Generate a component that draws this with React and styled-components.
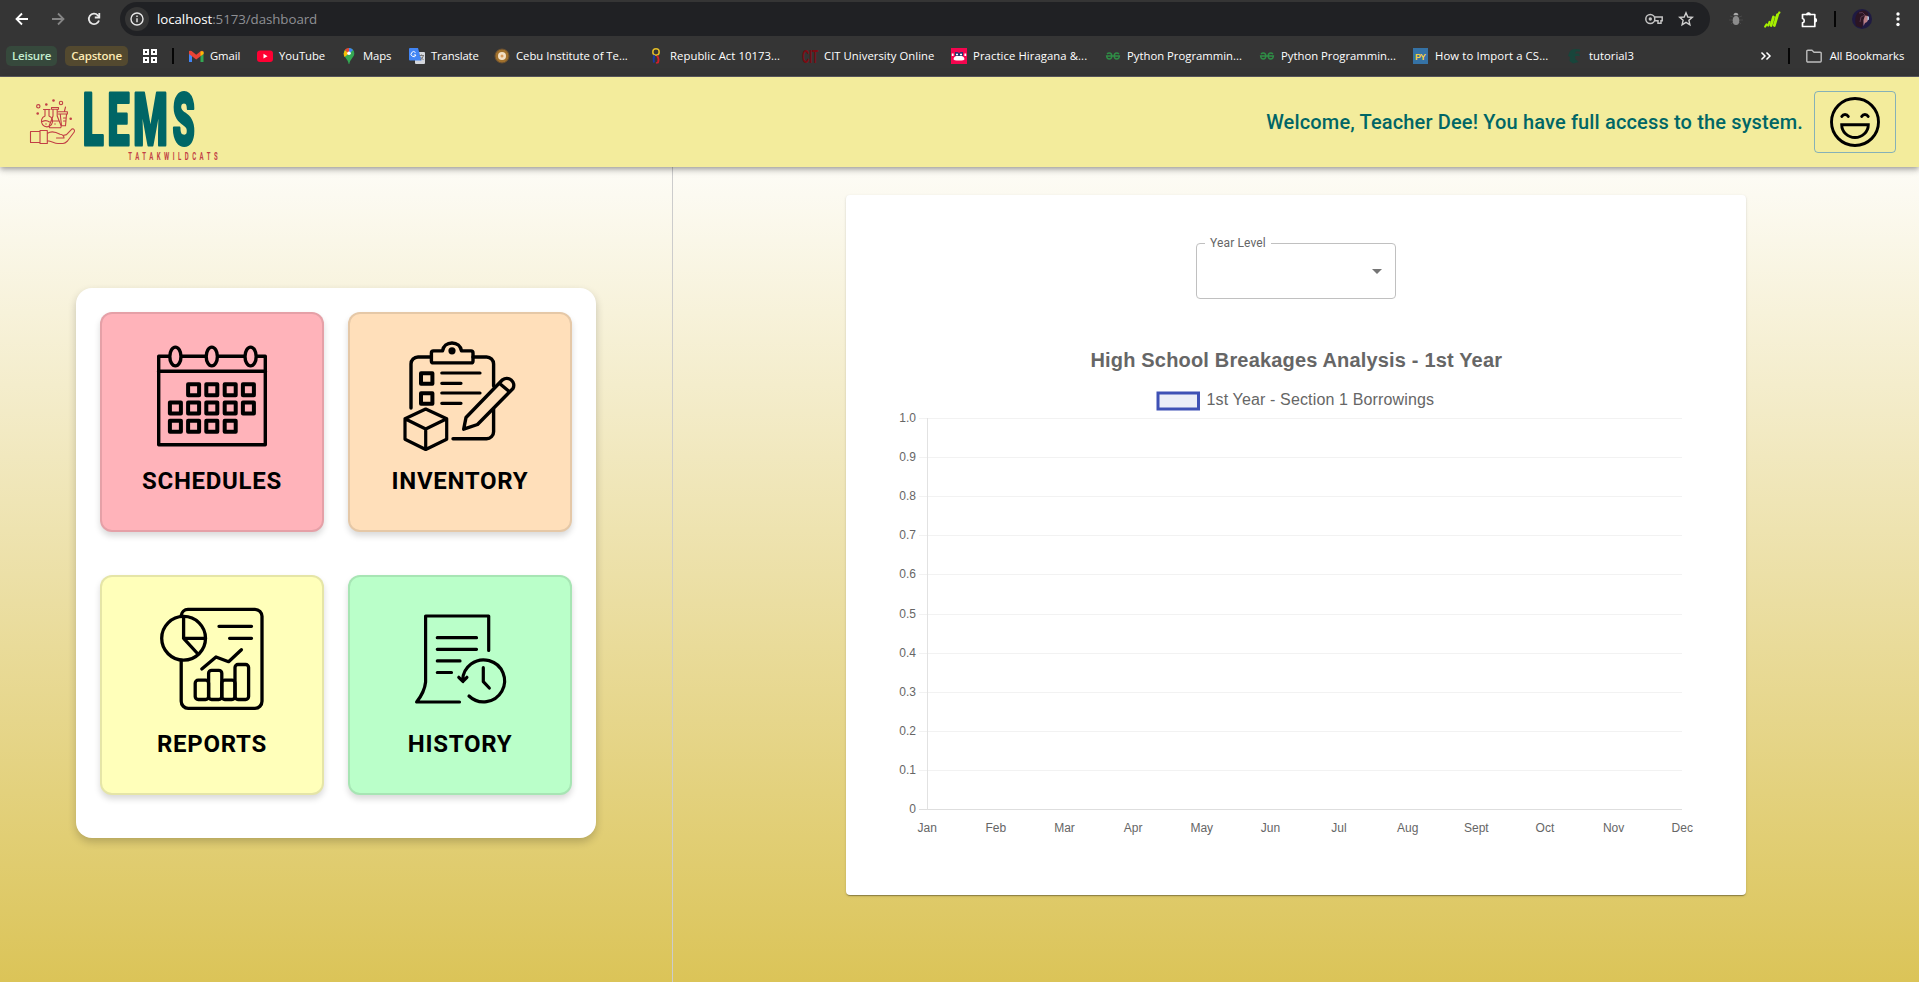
import React from "react";
import styled, { createGlobalStyle } from "styled-components";

const GlobalStyle = createGlobalStyle`
  * { box-sizing: border-box; }
  html, body { margin: 0; padding: 0; }
  body { font-family: Roboto, "Liberation Sans", sans-serif; background: #fff; overflow: hidden; }
`;

const uiFont = `"Open Sans", "Noto Sans", sans-serif`;

const Window = styled.div`
  display: flex;
  flex-direction: column;
  width: 100vw;
  height: 100vh;
`;

/* ---------- browser chrome ---------- */
const Chrome = styled.div`
  flex: none;
  height: 77px;
  background: #353535;
  border-bottom: 1px solid #5c5b60;
  font-family: ${uiFont};
  color: #fff;
`;
const ToolRow = styled.div`
  display: flex;
  align-items: center;
  height: 38px;
  padding-left: 4px;
`;
const ToolButton = styled.div`
  display: flex;
  align-items: center;
  justify-content: center;
  width: ${(p) => p.$w || 36}px;
  height: 38px;
  margin-left: ${(p) => p.$gap || 0}px;
  flex: none;
`;
const Omnibox = styled.div`
  display: flex;
  align-items: center;
  width: 1590px;
  height: 34px;
  margin-left: 8px;
  margin-right: 8px;
  padding: 0 16px 0 5px;
  border-radius: 17px;
  background: #202124;
`;
const InfoBadge = styled.div`
  display: flex;
  align-items: center;
  justify-content: center;
  width: 24px;
  height: 24px;
  border-radius: 50%;
  background: #353535;
  margin-right: 8px;
`;
const Url = styled.div`
  flex: 1;
  font-size: 13.3px;
  letter-spacing: -0.06px;
  line-height: 20px;
  color: #8f9094;
  span { color: #fff; }
`;
const OmniIcons = styled.div`
  display: flex;
  align-items: center;
  gap: 15px;
`;
const Bar = styled.div`
  width: 2px;
  height: 16px;
  background: #050505;
  margin-left: ${(p) => p.$gap || 0}px;
  flex: none;
`;
const BookmarkRow = styled.div`
  display: flex;
  align-items: center;
  height: 36px;
  padding-left: 6px;
`;
const Chip = styled.div`
  width: ${(p) => p.$w}px;
  height: 20px;
  margin-right: 8px;
  border-radius: 5px;
  background: ${(p) => p.$bg};
  color: ${(p) => p.$fg};
  font-size: 11.5px;
  font-weight: 600;
  letter-spacing: -0.2px;
  line-height: 19px;
  text-align: center;
  flex: none;
`;
const AppsIcon = styled.div`
  display: grid;
  grid-template-columns: 6px 6px;
  gap: 2px;
  margin: 0 15px 0 7px;
  i { width: 6px; height: 6px; border: 2px solid #fff; }
`;
const Bookmark = styled.div`
  display: flex;
  align-items: center;
  gap: 6px;
  width: ${(p) => p.$w}px;
  flex: none;
  font-size: 11.3px;
  line-height: 18px;
  white-space: nowrap;
  svg { flex: none; }
  span { letter-spacing: ${(p) => p.$ls || 0}px; }
`;
const Bookmarks = styled.div`
  display: flex;
  width: 1568px;
  margin-left: 14px;
  flex: none;
`;

/* ---------- page ---------- */
const Page = styled.div`
  flex: 1;
  display: flex;
  flex-direction: column;
  background: linear-gradient(to bottom, #ffffff 5%, #dbc458 100%);
`;
const AppBar = styled.header`
  display: flex;
  align-items: center;
  justify-content: space-between;
  height: 90px;
  flex: none;
  padding-right: 23px;
  background: #f3ec9c;
  position: relative;
  box-shadow: 0 2px 4px -1px rgba(0,0,0,.2), 0 4px 5px 0 rgba(0,0,0,.14), 0 1px 10px 0 rgba(0,0,0,.12);
`;
const AppBarRight = styled.div`
  display: flex;
  align-items: center;
  gap: 11px;
`;
const Welcome = styled.div`
  font-size: 20px;
  font-weight: 500;
  letter-spacing: 0.15px;
  line-height: 32px;
  color: #006666;
`;
const ProfileButton = styled.button`
  display: flex;
  align-items: center;
  justify-content: center;
  width: 82px;
  height: 62px;
  padding: 0;
  border: 1px solid rgba(25, 118, 210, 0.5);
  border-radius: 4px;
  background: transparent;
`;
const Content = styled.main`
  flex: 1;
  display: flex;
`;
const LeftPane = styled.section`
  width: 673px;
  padding: 121px 0 0 76px;
  border-right: 1px solid #cccccc;
`;
const RightPane = styled.section`
  flex: 1;
  display: flex;
  justify-content: center;
  padding-top: 28px;
`;
const MenuCard = styled.div`
  display: grid;
  grid-template-columns: 224px 224px;
  grid-template-rows: 263px 263px;
  column-gap: 24px;
  width: 520px;
  height: 550px;
  padding: 24px;
  border-radius: 16px;
  background: #fff;
  box-shadow: 0 4px 8px rgba(0, 0, 0, 0.2);
`;
const Tile = styled.div`
  display: flex;
  flex-direction: column;
  align-items: center;
  height: 220px;
  padding-top: 22px;
  border: 2px solid rgba(0, 0, 0, 0.1);
  border-radius: 12px;
  background: ${(p) => p.$bg};
  box-shadow: 0 4px 6px rgba(0, 0, 0, 0.15);
`;
const TileLabel = styled.div`
  margin-top: 9px;
  font-size: 24px;
  font-weight: 700;
  letter-spacing: 0.7px;
  line-height: 33px;
  color: #000;
`;
const ChartCard = styled.div`
  display: flex;
  flex-direction: column;
  align-items: center;
  width: 900px;
  height: 700px;
  padding-top: 48px;
  border-radius: 4px;
  background: #fff;
  box-shadow: 0 2px 1px -1px rgba(0,0,0,.2), 0 1px 1px 0 rgba(0,0,0,.14), 0 1px 3px 0 rgba(0,0,0,.12);
`;
const Select = styled.fieldset`
  width: 200px;
  height: 61px;
  margin: -5px 0 0;
  padding: 0 6px 0 8px;
  border: 1px solid #c0c0c0;
  border-radius: 4px;
  legend {
    padding: 0 5px;
    font-size: 12px;
    letter-spacing: 0.14px;
    line-height: 11px;
    color: #666;
  }
  svg {
    display: block;
    margin: 10px 0 0 auto;
  }
`;

const ink = { fill: "none", stroke: "#000", strokeWidth: 3.4, strokeLinecap: "round", strokeLinejoin: "round" };

function ScheduleIcon() {
  const cols = [23.4, 41.6, 59.8, 78.2, 96.4];
  const cells = [
    [1, 53.7], [2, 53.7], [3, 53.7], [4, 53.7],
    [0, 72], [1, 72], [2, 72], [3, 72], [4, 72],
    [0, 90.3], [1, 90.3], [2, 90.3], [3, 90.3],
  ];
  return (
    <svg width="120" height="120" viewBox="0 0 120 120" {...ink}>
      <rect x="6.7" y="20.3" width="106.6" height="88.5" />
      <path d="M6.7 35.2H113.3" />
      {[23.4, 59.8, 98.6].map((x) => (
        <ellipse key={x} cx={x} cy="20.5" rx="5.6" ry="9.4" fill="#ffb3ba" />
      ))}
      {cells.map(([c, y]) => (
        <rect key={c + "-" + y} x={cols[c] - 5.5} y={y - 5.5} width="11" height="11" strokeWidth="4" />
      ))}
    </svg>
  );
}

function InventoryIcon() {
  return (
    <svg width="120" height="120" viewBox="0 0 120 120" {...ink}>
      <path d="M11 72V28a7 7 0 0 1 7-7H31.4M73 21H86.6a7 7 0 0 1 7 7V50M93.6 73V95.7a7 7 0 0 1-7 7H53" />
      <path d="M33.4 14.9H42.5c.8-4.8 4.5-7.9 9.5-7.9s8.7 3.1 9.5 7.9H71a2 2 0 0 1 2 2V24.9a2 2 0 0 1-2 2H33.4a2 2 0 0 1-2-2V16.9a2 2 0 0 1 2-2z" />
      <circle cx="52" cy="14.8" r="3.6" fill="#000" stroke="none" />
      <rect x="21" y="37.2" width="11.4" height="10.6" strokeWidth="4" />
      <rect x="21" y="57.2" width="11.4" height="10.6" strokeWidth="4" />
      <path d="M41.8 37H80M41.8 47.3H61M41.8 57H80M41.8 67.3H61" strokeWidth="3.2" />
      <path d="M63.7 93.2L66 81.5L102.5 43.8a7 7 0 0 1 10.5 8.7L77.5 88.5ZM99.3 47.3L108.3 54.7" />
      <path d="M25.7 73L46.7 82.8V103.3L25.7 113.5L5 103.3V82.8ZM5 82.8L25.7 93L46.7 82.8M25.7 93V113.5" strokeWidth="3.2" />
    </svg>
  );
}

function ReportsIcon() {
  return (
    <svg width="120" height="120" viewBox="0 0 120 120" {...ink} strokeWidth="3.3">
      <path d="M29.2 16.5a7 7 0 0 1 6.8-6.2H103a7 7 0 0 1 7 7V102.3a7 7 0 0 1-7 7H36.2a7 7 0 0 1-7-7V61.5" />
      <circle cx="31.6" cy="39.3" r="21.9" />
      <path d="M31.6 17.4V39.3H53.5M31.6 39.3L45.5 54.5" />
      <path d="M67 27.3H99.5M77.6 39.3H99.5M49.8 69.9L64 58L76.6 62.7L89.4 50.7" />
      <rect x="43.2" y="81.2" width="13.4" height="19.3" rx="3" />
      <rect x="56.6" y="71.3" width="13.2" height="29.2" rx="3" />
      <rect x="69.8" y="81.2" width="13.2" height="19.3" rx="3" />
      <rect x="83" y="65.5" width="13.6" height="35" rx="3" />
    </svg>
  );
}

function HistoryIcon() {
  return (
    <svg width="120" height="120" viewBox="0 0 120 120" {...ink} strokeWidth="3.2">
      <path d="M88.7 51.5V17H25.6V83Q24.6 93 16.6 103H59.5" />
      <path d="M37.3 38.7H76.5M37.3 50.3H76.5M37.3 61.9H60M37.3 73.5H51.5" />
      <path d="M62.6 81.5A21 21 0 1 1 69 97M58.8 78.3L62.9 82.5L66.9 78.3" />
      <path d="M83.3 68.7V82.7L89.3 89" />
    </svg>
  );
}

function Smiley() {
  return (
    <svg width="50" height="50" viewBox="0 0 50 50" fill="none" stroke="#000" strokeWidth="2.9" strokeLinecap="round" strokeLinejoin="round">
      <circle cx="25" cy="25" r="23.5" />
      <path d="M11.8 19.5c1.5-2.6 5-2.6 6.5 0M31.7 19.5c1.5-2.6 5-2.6 6.5 0" />
      <path d="M11.7 27.7H38.3A13.3 12.8 0 0 1 11.7 27.7Z" strokeLinejoin="miter" />
    </svg>
  );
}

function Logo() {
  const letters = [["L", 82.7, 21], ["E", 107.6, 22], ["M", 133.2, 34.5], ["S", 172.4, 22.3]];
  return (
    <svg width="240" height="90" viewBox="0 0 240 90">
      <g fill="none" stroke="#c23f45" strokeWidth="1.1" strokeLinecap="round" strokeLinejoin="round">
        <path d="M40 54.5H30.5V65.5H40M40 53.5H47.3V66.5H40ZM47.5 56.3C51 54 56 55 60 57.3c3 .4 4 1.5 4 3.7H56.5M47.5 63.8C52 64 54 66.5 58 66.5H63c2 0 3-1 4.5-2.5L74.2 55c1-2-.6-3.7-2.4-2.9L66.5 57.6L63 58.5" />
        <path d="M43.5 32.5H50M45 33V39a5.6 5.6 0 1 0 4 0V33M42.5 44.5Q46 42.5 49.5 45" />
        <path d="M51.5 30.5H58.5V32.3H51.5ZM53 32.5V39L49.3 48.5c-.5 1.5 0 2.3 1.3 2.3H59.5c1.5 0 2-.8 1.5-2.3L57.2 39V32.5M51 44H59" />
        <path d="M58 34.7H67.4V37H58.5M60.3 37.5L61.5 48.8H65.5L66.5 37.5M64.5 34L65.5 30M63.5 41h2M63.5 44h2" />
        <circle cx="38.3" cy="29.3" r="1.7" /><circle cx="61" cy="26" r="1.7" />
      </g>
      <g fill="#c23f45">
        <circle cx="46.3" cy="27.5" r="1.3" /><circle cx="53.5" cy="23.5" r="1.3" />
        <circle cx="37.7" cy="36.5" r="1.3" /><circle cx="70.7" cy="41.8" r="1.3" />
        <circle cx="46" cy="47" r=".7" /><circle cx="55" cy="47" r=".7" />
      </g>
      <g fontFamily="Roboto, sans-serif" fontWeight="900" fontSize="73" fill="#006666" stroke="#006666" strokeWidth="3" strokeLinejoin="round">
        {letters.map(([ch, x, w]) => (
          <text key={ch} x={x} y="68.3" textLength={w} lengthAdjust="spacingAndGlyphs">{ch}</text>
        ))}
      </g>
      <text transform="translate(128.3 83.3) scale(.58 1)" fontFamily="Roboto, sans-serif" fontWeight="700" fontSize="10.3" fill="#c23f45" textLength="154">TATAKWILDCATS</text>
    </svg>
  );
}

/* ---------- chrome glyphs ---------- */
const line = { fill: "none", stroke: "#e8e8e8", strokeWidth: 1.8, strokeLinecap: "square" };
const Arrow = ({ flip, color }) => (
  <svg width="14" height="14" viewBox="0 0 14 14" {...line} stroke={color} strokeLinecap="butt">
    <path d={flip ? "M1 7H12.5M7 1.5L12.5 7L7 12.5" : "M13 7H1.5M7 1.5L1.5 7L7 12.5"} />
  </svg>
);
const Reload = () => (
  <svg width="14" height="14" viewBox="0 0 14 14" {...line} strokeLinecap="butt">
    <path d="M12 8.5A5.2 5.2 0 1 1 10.8 3.3L12.5 5" /><path d="M12.3 1V5.5H7.8" />
  </svg>
);
const Info = () => (
  <svg width="14" height="14" viewBox="0 0 14 14" fill="none" stroke="#e8e8e8" strokeWidth="1.4">
    <circle cx="7" cy="7" r="6" /><path d="M7 6.2V10.2M7 3.6V5.1" />
  </svg>
);
const Key = () => (
  <svg width="18" height="12" viewBox="0 0 18 12" fill="none" stroke="#c4c4c4" strokeWidth="1.5">
    <path d="M9.3 4H17.2V7.8H16V10.2H13V7.8H9.3" /><circle cx="5.3" cy="6" r="4.5" /><circle cx="5.3" cy="6" r="1.7" fill="#c4c4c4" stroke="none" />
  </svg>
);
const Star = () => (
  <svg width="16" height="16" viewBox="0 0 16 16" fill="none" stroke="#d0d0d0" strokeWidth="1.4">
    <path d="M8 1.8L9.8 6L14.3 6.4L10.9 9.3L11.9 13.8L8 11.4L4.1 13.8L5.1 9.3L1.7 6.4L6.2 6Z" />
  </svg>
);
const Bug = () => (
  <svg width="14" height="14" viewBox="0 0 14 14">
    <path d="M1 4L4 5M13 4L10 5M0 8H4M14 8H10M2 12L4 10M12 12L10 10" stroke="#484848" />
    <ellipse cx="7" cy="8.5" rx="3.3" ry="4.5" fill="#8c8c8c" /><path d="M4.5 3.2a2.5 2.5 0 0 1 5 0z" fill="#aaa" />
  </svg>
);
const Leaf = () => (
  <svg width="17" height="17" viewBox="0 0 17 17" fill="none" stroke="#a6f000" strokeLinecap="round">
    <path d="M1.2 15.5L2.5 13.5M4.3 14.5L5.5 11" strokeWidth="2.2" />
    <path d="M7 14.5L9.5 6M10.3 14.5L13.5 4" strokeWidth="2.8" /><path d="M12 7L13.3 3.5M15 1.5H15.6M15.3 2L13.5 4" strokeWidth="1.8" />
  </svg>
);
const Puzzle = () => (
  <svg width="17" height="17" viewBox="0 0 17 17" fill="none" stroke="#fff" strokeWidth="1.7" strokeLinejoin="round">
    <path d="M1.5 3.5H6a1.7 1.7 0 0 1 3 0H13.8V7.8a1.6 1.6 0 0 1 0 3V15.5H1.5V11.8a2.2 2.2 0 0 0 0-4.3Z" />
    <path d="M6 3.5a1.5 1.5 0 0 1 3 0ZM13.8 7.8a1.5 1.5 0 0 1 0 3Z" fill="#fff" />
  </svg>
);
const Avatar = () => (
  <svg width="20" height="20" viewBox="0 0 20 20">
    <circle cx="10" cy="10" r="10" fill="#1f1a42" />
    <path d="M4 17C2 9 4 2 11 1.5C17 2 17 6 15 8L12 9L10 19Z" fill="#2b1523" />
    <path d="M7 4Q11 2 13 6L9 8L8 13" fill="none" stroke="#5c3850" strokeWidth="1" />
    <path d="M13 6.5L16 7L16.5 10L15 13L13 14L11.5 17L11.5 11Z" fill="#b97f86" /><path d="M15.5 7.5l1.5 0 0 3-1.5 1z" fill="#a9c2dc" />
  </svg>
);
const Dots = () => (
  <svg width="4" height="16" viewBox="0 0 4 16" fill="#fff">
    <circle cx="2" cy="3" r="1.7" /><circle cx="2" cy="8" r="1.7" /><circle cx="2" cy="13.5" r="1.7" />
  </svg>
);
const Chevrons = () => (
  <svg width="12" height="10" viewBox="0 0 12 10" {...line} stroke="#fff" strokeWidth="1.5">
    <path d="M2 2L5 5L2 8M7 2L10 5L7 8" />
  </svg>
);
const Folder = () => (
  <svg width="16" height="14" viewBox="0 0 16 14" fill="none" stroke="#bdbdbd" strokeWidth="1.4" strokeLinejoin="round">
    <path d="M.8 12V2.2a1 1 0 0 1 1-1H6L8 3.2H14.2a1 1 0 0 1 1 1V12a1 1 0 0 1-1 1H1.8a1 1 0 0 1-1-1Z" />
  </svg>
);

const Fav = ({ children }) => <svg width="16" height="16" viewBox="0 0 16 16" overflow="visible">{children}</svg>;
const greens = (
  <Fav>
    <g fill="none" stroke="#2f8d46" strokeWidth="1.4">
      <path d="M2 6Q3 5 4.3 5Q6.8 5 6.8 8Q6.8 11 4.3 11Q1.8 11 1.6 8H14.4Q14.2 11 11.7 11Q9.2 11 9.2 8Q9.2 5 11.7 5Q13 5 14 6" />
    </g>
  </Fav>
);
const bookmarks = [
  { w: 69, t: "Gmail", ls: -0.1, i: <Fav>
    <path d="M1 3.5H4V14H1Z" fill="#4285f4" /><path d="M12.5 3.5H15.5V14H12.5Z" fill="#34a853" />
    <path d="M1 3Q3 2 4.5 3.8L8.2 6.8L12 3.8Q14 2 15.5 3.5V6L8.2 11.5L1 6Z" fill="#ea4335" /><path d="M12.5 3.6Q15 2.5 15.5 4.5V6L12.5 8Z" fill="#fbbc04" /></Fav> },
  { w: 84, t: "YouTube", ls: -0.05, i: <Fav><rect y="2.5" width="16" height="11.5" rx="3" fill="#ff0033" /><path d="M6.5 5.8L10.5 8.2L6.5 10.6Z" fill="#fff" /></Fav> },
  { w: 68, t: "Maps", ls: -0.1, i: <Fav>
    <path d="M8 0a5.3 5.3 0 0 1 5.3 5.5C13.3 9 9 11 8.3 16H7.7C7 11 2.7 9 2.7 5.5A5.3 5.3 0 0 1 8 0Z" fill="#34a853" />
    <path d="M8 5.5L3.5 9Q2.7 7 2.7 5.5L4 2Z" fill="#fbbc04" /><path d="M3.8 2A5.3 5.3 0 0 1 8 0L8 5.5Z" fill="#ea4335" /><path d="M8 0A5.3 5.3 0 0 1 12 2L8 6Z" fill="#4285f4" />
    <circle cx="8" cy="5.3" r="1.8" fill="#fff" /></Fav> },
  { w: 85, t: "Translate", ls: -0.15, i: <Fav>
    <rect x="6" y="4" width="10" height="12" rx="1" fill="#d4d7dc" /><path d="M1 0H9L12.5 12.5H1Q0 12.5 0 11.5V1Q0 0 1 0Z" fill="#4285f4" />
    <path d="M6.5 4.5A2.5 2.5 0 1 0 7 7H4.8" stroke="#fff" fill="none" /><path d="M10.5 7.5H15M12.5 6.5V7.5M14.5 7.5Q13.5 11 11 12M11.5 9L14.5 12" stroke="#777" fill="none" /></Fav> },
  { w: 154, t: "Cebu Institute of Te...", ls: 0, i: <Fav>
    <circle cx="8" cy="8" r="7" fill="#a0702c" stroke="#6a5031" strokeWidth="1" /><circle cx="8" cy="8" r="4" fill="#f2dfc4" /><circle cx="8" cy="8" r="1.5" fill="#d99b5c" /></Fav> },
  { w: 154, t: "Republic Act 10173...", ls: 0.06, i: <Fav>
    <circle cx="8" cy="4" r="3.2" fill="none" stroke="#e3bd27" strokeWidth="1.5" /><path d="M6.5 7Q5 10 6 14.5" stroke="#1739a8" strokeWidth="2" fill="none" /><path d="M9 7.5Q11.5 11 10 14.5L8 15" stroke="#d01f2b" strokeWidth="1.8" fill="none" /></Fav> },
  { w: 149, t: "CIT University Online", ls: 0.04, i: <Fav><text x="0" y="14.5" fontFamily="Liberation Sans, sans-serif" fontWeight="700" fontSize="18" textLength="16" lengthAdjust="spacingAndGlyphs" fill="#7b0b12">CIT</text></Fav> },
  { w: 154, t: "Practice Hiragana &...", ls: 0.08, i: <Fav>
    <rect width="16" height="16" fill="#f5054f" /><path d="M2.5 11Q3 7.5 8 7.5T13.5 11Q13.5 12.5 8 12.5T2.5 11Z" fill="#fff" /><path d="M4 4H6.5L8 5L9.5 4H12V8H4Z" fill="#29366f" /><path d="M5 5.8h2v1.5h-2zM9 5.8h2v1.5h-2zM.8 5.5h1.8v2.5h-1.8zM13.4 5.5h1.8v2.5h-1.8z" fill="#fff" /></Fav> },
  { w: 154, t: "Python Programmin...", ls: 0, i: greens },
  { w: 154, t: "Python Programmin...", ls: 0, i: greens },
  { w: 154, t: "How to Import a CS...", ls: 0.12, i: <Fav><rect width="15" height="16" fill="#3572a5" /><text x="2" y="12" fontFamily="Liberation Sans, sans-serif" fontWeight="700" fontSize="9" textLength="11" fill="#f5cf45">PY</text></Fav> },
  { w: 150, t: "tutorial3", ls: 0, i: <Fav><path d="M13 1.5Q5-.5 2.5 4L1 8L3 9L2.5 13L6 15.5L11.5 14L8.5 11L8 8H13L12 5.5H8L9 3.5H13Z" fill="#18453b" /></Fav> },
];

function Chart() {
  const months = ["Jan", "Feb", "Mar", "Apr", "May", "Jun", "Jul", "Aug", "Sept", "Oct", "Nov", "Dec"];
  const ticks = ["1.0", "0.9", "0.8", "0.7", "0.6", "0.5", "0.4", "0.3", "0.2", "0.1", "0"];
  return (
    <svg width="900" height="596" viewBox="0 104 900 596" fontFamily="Liberation Sans, Arial, sans-serif" fill="#666">
      <text x="244.5" y="172" fontSize="20" fontWeight="700" textLength="411.5">High School Breakages Analysis - 1st Year</text>
      <rect x="312" y="198" width="40.5" height="16" fill="#ebedf7" stroke="#3f51b5" strokeWidth="3" />
      <text x="360.5" y="209.5" fontSize="16" textLength="227.5">1st Year - Section 1 Borrowings</text>
      {ticks.map((t, i) => {
        const y = Math.round(223 + i * 39.1) + 0.5;
        return (
          <g key={t}>
            <path d={`M73 ${y}H836`} stroke={i === 10 ? "#dedede" : "#f2f2f2"} />
            <text x="70" y={y + 3.5} textAnchor="end" fontSize="12">{t}</text>
          </g>
        );
      })}
      <path d="M81.5 223V614.5" stroke="#e2e2e2" />
      {months.map((m, i) => (
        <text key={m} x={81.2 + i * 68.64} y="636.5" textAnchor="middle" fontSize="12">{m}</text>
      ))}
    </svg>
  );
}

const tiles = [
  { label: "SCHEDULES", bg: "#ffb3ba", Icon: ScheduleIcon },
  { label: "INVENTORY", bg: "#ffdfba", Icon: InventoryIcon },
  { label: "REPORTS", bg: "#ffffba", Icon: ReportsIcon },
  { label: "HISTORY", bg: "#baffc9", Icon: HistoryIcon },
];

export default function App() {
  return (
    <Window>
      <GlobalStyle />
      <Chrome>
        <ToolRow>
          <ToolButton><Arrow color="#fff" /></ToolButton>
          <ToolButton><Arrow flip color="#858585" /></ToolButton>
          <ToolButton><Reload /></ToolButton>
          <Omnibox>
            <InfoBadge><Info /></InfoBadge>
            <Url><span>localhost</span>:5173/dashboard</Url>
            <OmniIcons><Key /><Star /></OmniIcons>
          </Omnibox>
          <ToolButton><Bug /></ToolButton>
          <ToolButton><Leaf /></ToolButton>
          <ToolButton $gap={1}><Puzzle /></ToolButton>
          <Bar $gap={7} />
          <ToolButton $w={20} $gap={16}><Avatar /></ToolButton>
          <ToolButton $w={4} $gap={24}><Dots /></ToolButton>
        </ToolRow>
        <BookmarkRow>
          <Chip $w={51} $bg="#36493c" $fg="#c4eed0">Leisure</Chip>
          <Chip $w={63} $bg="#53492f" $fg="#fdebb5">Capstone</Chip>
          <AppsIcon><i /><i /><i /><i /></AppsIcon>
          <Bar />
          <Bookmarks>
            {bookmarks.map((b, i) => (
              <Bookmark key={i} $w={b.w} $ls={b.ls}>{b.i}<span>{b.t}</span></Bookmark>
            ))}
          </Bookmarks>
          <ToolButton $w={12} $gap={4}><Chevrons /></ToolButton>
          <Bar $gap={16} />
          <ToolButton $w={16} $gap={16}><Folder /></ToolButton>
          <ToolButton $w={76} $gap={7}><Bookmark $ls={-0.05}><span>All Bookmarks</span></Bookmark></ToolButton>
        </BookmarkRow>
      </Chrome>
      <Page>
        <AppBar>
          <Logo />
          <AppBarRight>
            <Welcome>Welcome, Teacher Dee! You have full access to the system.</Welcome>
            <ProfileButton aria-label="Profile"><Smiley /></ProfileButton>
          </AppBarRight>
        </AppBar>
        <Content>
          <LeftPane>
            <MenuCard>
              {tiles.map(({ label, bg, Icon }) => (
                <Tile key={label} $bg={bg}>
                  <Icon />
                  <TileLabel>{label}</TileLabel>
                </Tile>
              ))}
            </MenuCard>
          </LeftPane>
          <RightPane>
            <ChartCard>
              <Select>
                <legend>Year Level</legend>
                <svg width="24" height="24" viewBox="0 0 24 24" fill="#757575"><path d="M7 10l5 5 5-5z" /></svg>
              </Select>
              <Chart />
            </ChartCard>
          </RightPane>
        </Content>
      </Page>
    </Window>
  );
}
